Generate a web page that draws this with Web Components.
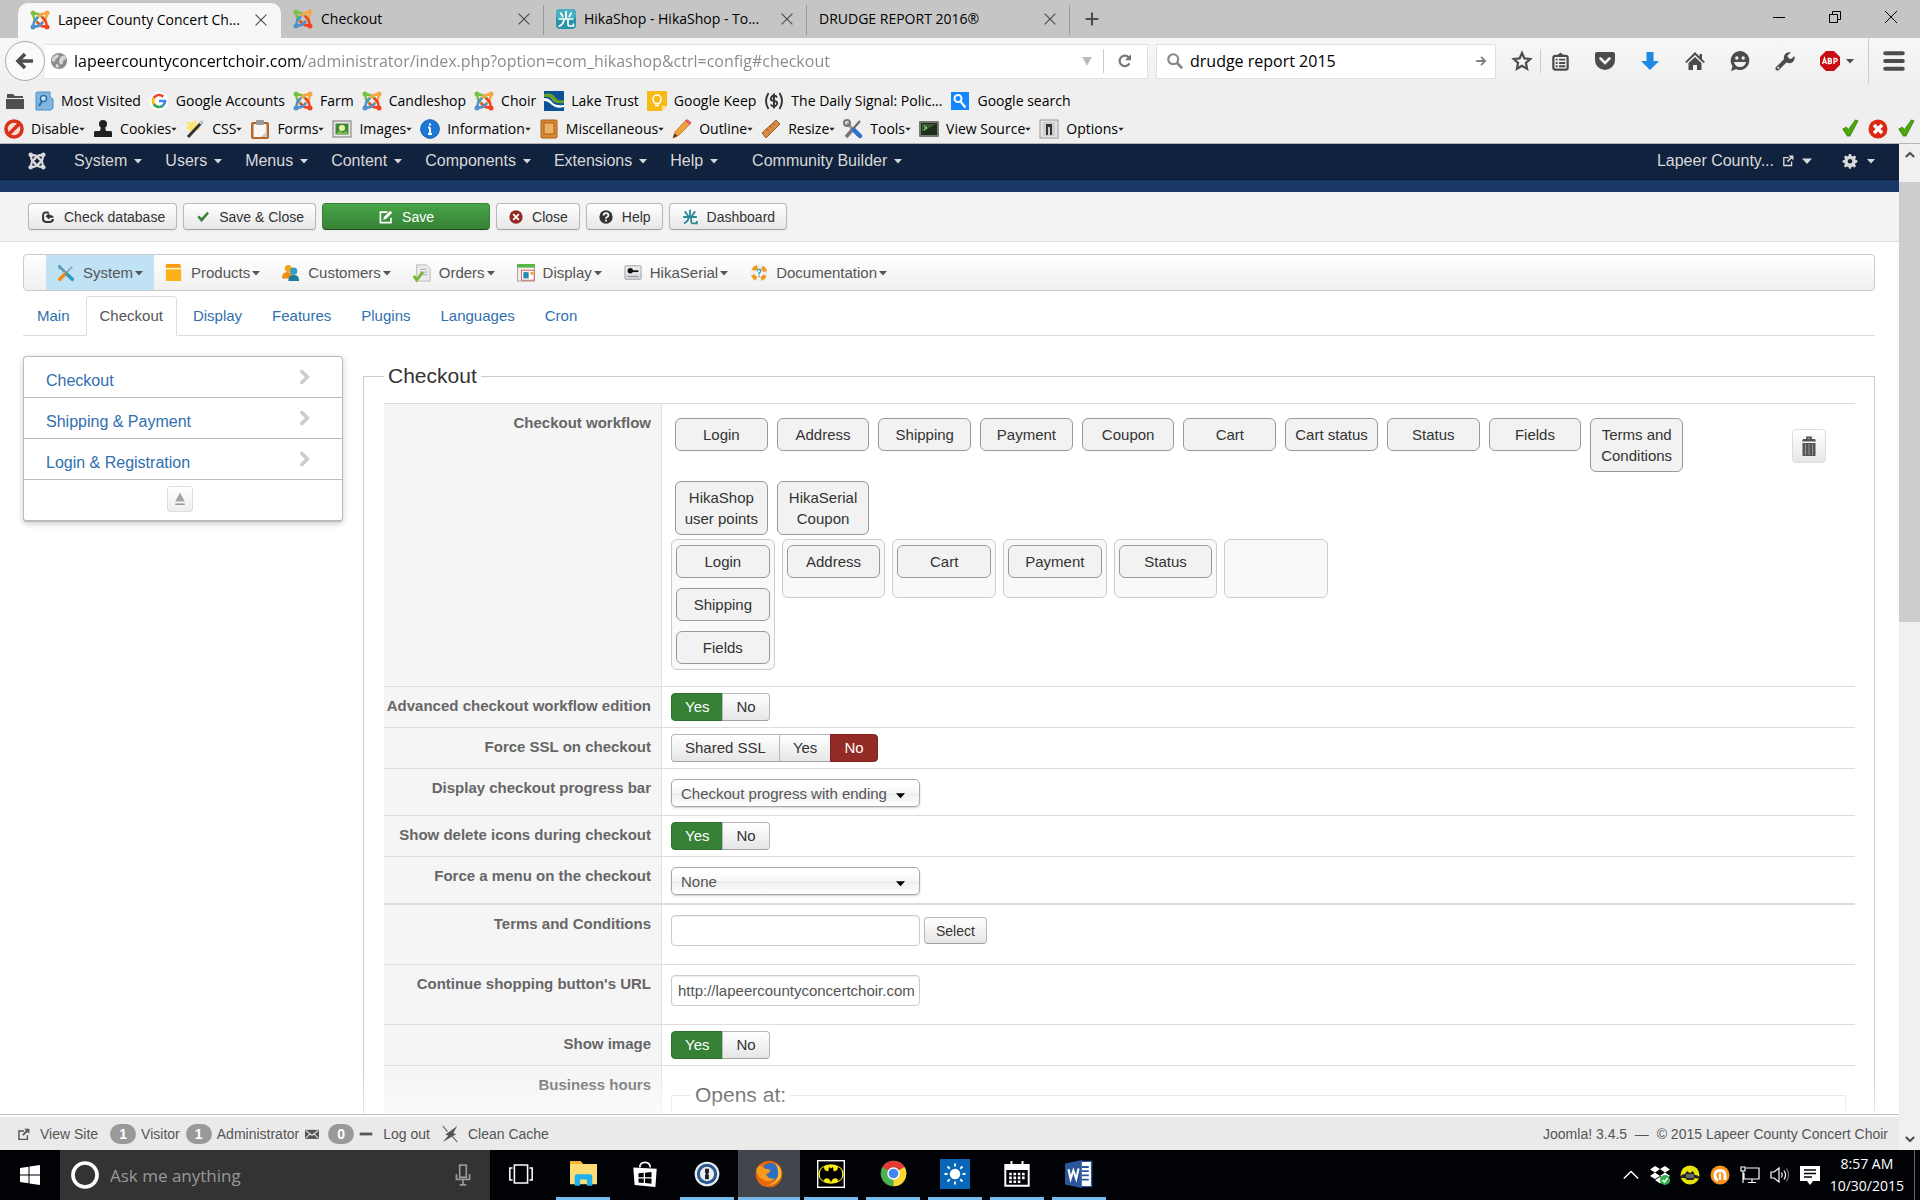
<!DOCTYPE html>
<html lang="en">
<head>
<meta charset="utf-8">
<title>Lapeer County Concert Choir - Administration</title>
<style>
html,body{margin:0;height:100%}
body{display:flex;flex-direction:column;overflow:hidden;background:#fff;font-family:"Liberation Sans",Arial,sans-serif;font-size:15px;color:#333}
</style>
</head>
<body>
<browser-chrome></browser-chrome>
<browser-view>
  <joomla-navbar></joomla-navbar>
  <page-toolbar></page-toolbar>
  <page-content></page-content>
  <status-bar></status-bar>
</browser-view>
<task-bar></task-bar>

<script>
const define = (name, css, html) => {
  const t = document.createElement('template');
  t.innerHTML = '<style>*,:host{box-sizing:border-box}:host{display:block}' + css + '</style>' + html;
  customElements.define(name, class extends HTMLElement {
    constructor() { super(); this.attachShadow({mode: 'open'}).append(t.content.cloneNode(true)); }
  });
};

/* ---------- icons ---------- */
const arm = '<path d="M8 13 5 10C3.4 8.4 3.5 6.4 3.3 3.3 6.4 3.5 8.4 3.4 10 5l3 3" fill="none" stroke-width="2.6"/><circle cx="3" cy="3" r="2.5" stroke="none"/>';
const joomla = (a, b, c, d) => [a, b, c, d].map((k, i) => `<g fill="${k}" stroke="${k}" transform="rotate(${i * 90} 10 10)">${arm}</g>`).join('');
const X = (c, w) => `<path d="M4 4 16 16M16 4 4 16" stroke="${c}" stroke-width="${w}" fill="none"/>`;
const hika = c => `<path d="M10 2v8M4.5 3.5 7 8M15.500 3.500 13 8M2.500 10h15M8 10c0 4-1.500 6-5.500 7.500M12 10v5q0 2 2 2h3.500v-2.500" stroke="${c}" stroke-width="1.700" fill="none"/>`;
const ICONS = {
  joomla: joomla('#7ac143', '#f9a541', '#f44321', '#5091cd'),
  joomlaW: joomla('#d9d9d9', '#d9d9d9', '#d9d9d9', '#d9d9d9'),
  close: X('#4d4d4d', 1.3), winclose: X('#000', 1),
  min: '<path d="M4 10.500h12" stroke="#000" fill="none"/>',
  restore: '<path d="M4.500 7.500h8v8h-8zM7.500 7V4.500h8v8H13" stroke="#000" fill="none"/>',
  plus: '<path d="M10 2v16M2 10h16" stroke="#4d4d4d" stroke-width="2.600"/>',
  hika: '<rect width="20" height="20" rx="4" fill="#2b93a8"/><rect width="20" height="10" rx="4" fill="#46b0c2"/>' + hika('#fff'),
  hika2: '<path d="M10 1v9M3.500 3 8 9M16.500 3 12 9M1.500 10h17M8.500 9c0 4-1.500 7-6 9M11.500 10v6q0 2 2 2h5v-3" stroke="#2a8796" stroke-width="2.200" fill="none"/>',
  back: '<path d="M10 3 3 10l7 7M3.500 10H18" stroke="#4c4c4c" stroke-width="3.600" fill="none"/>',
  globe: '<circle cx="10" cy="10" r="9" fill="#8c8c8c"/><path d="M3 6q4-4 7-3l-1 3-3 2-1 3-3-1zM12 5l4-1 2 4-3 1-1 4-3 1-1-4zM7 13l3 2-1 3-3-2z" fill="#d8d8d8"/>',
  drop: '<path d="M4 5h12l-6 11z" fill="#bbb"/>',
  reload: '<path d="M15.500 13A6.500 6.500 0 1 1 15 6" stroke="#777" stroke-width="2.800" fill="none"/><path d="M17.500 1.500V9H10z" fill="#777"/>',
  search: '<circle cx="8" cy="8" r="5.500" stroke="#888" stroke-width="2.400" fill="none"/><path d="M12 12l6 6" stroke="#888" stroke-width="3"/>',
  go: '<path d="M2 10h15M10 3l7 7-7 7" stroke="#808080" stroke-width="3" fill="none"/>',
  star: '<path d="M10 2l2.400 5.400 5.800.6-4.300 4 1.200 5.800L10 14.800l-5.100 3L6.100 12 1.800 8l5.800-.6z" stroke="#4c4c4c" stroke-width="2.200" fill="none"/>',
  clip: '<rect x="2.500" y="4" width="15" height="14.500" rx="2" fill="none" stroke="#4c4c4c" stroke-width="2.400"/><path d="M6 4 10 .5 14 4z" fill="#4c4c4c"/><path d="M5 8h2m1.500 0H15M5 11.500h2m1.500 0H15M5 15h2m1.500 0H15" stroke="#4c4c4c" stroke-width="2"/>',
  pocket: '<path d="M2 1h16q2 0 2 2v6a10 10 0 0 1-20 0V3q0-2 2-2z" fill="#4c4c4c"/><path d="M5.500 7.500 10 12l4.500-4.500" stroke="#f1f1f1" stroke-width="2.600" fill="none" stroke-linecap="round"/>',
  down: '<path d="M6.500 1h7v9H19l-9 9-9-9h5.500z" fill="#1e88e5"/>',
  home: '<path d="M10 1 0 11l1.500 1L10 4l8.500 8 1.500-1-3-3V3h-2.500v2.500z" fill="#4c4c4c"/><path d="M3.500 12 10 6l6.500 6v7H12v-5H8v5H3.500z" fill="#4c4c4c"/>',
  smile: '<path d="M10 0a9.500 9.500 0 1 1-4 18.200L1 20l1.500-5A9.500 9.500 0 0 1 10 0z" fill="#4c4c4c"/><circle cx="6.800" cy="7" r="1.700" fill="#f1f1f1"/><circle cx="13.200" cy="7" r="1.700" fill="#f1f1f1"/><path d="M4 11h12q-1 5-6 5t-6-5z" fill="#f1f1f1"/>',
  wrench: '<path d="M2.500 17.500 12 8" stroke="#4c4c4c" stroke-width="4" stroke-linecap="round"/><path d="M16 1.500a5.500 5.500 0 1 0 3.500 3.500L16 8l-3-1-.5-2.500z" fill="#4c4c4c"/><circle cx="3.300" cy="16.700" r="1" fill="#fff"/>',
  abp: '<path d="M6 0h8l6 6v8l-6 6H6l-6-6V6z" fill="#c70d12"/><path d="M2.500 13 4.500 7l2 6M3.300 11.300h2.500M8.300 7.500v5h1.700q1.500 0 1.500-1.300T10 10H8.500 10q1.300 0 1.300-1.200T10 7.500zM14 13V7.500h1.500q1.700 0 1.700 1.500t-1.700 1.500H14" stroke="#fff" stroke-width="1.300" fill="none"/>',
  burger: '<path d="M2 3h16M2 10h16M2 17h16" stroke="#4c4c4c" stroke-width="3.600" stroke-linecap="round"/>',
  caret: '<path d="M2 6h16l-8 9z" fill="#4c4c4c"/>', caretS: '<path d="M1 6h18l-9 10z" fill="#222"/>',
  folder: '<path d="M2 3h6l2 2h8v2H2zM1 8h18v10H1z" fill="#4f4f4f"/>',
  visited: '<path d="M3 1h13v5l3 2v9l-2 2H2V2z" fill="#7eb6df" stroke="#4d8fc4"/><circle cx="9.500" cy="7.500" r="3" fill="#cfe6f7" stroke="#2d6ea8" stroke-width="1.500"/><path d="M8 10l-3 5" stroke="#2d6ea8" stroke-width="2"/>',
  google: '<circle cx="10" cy="10" r="9.500" fill="#fff"/><g fill="none" stroke-width="2.700"><path d="M14.300 5.800A6 6 0 0 0 4.800 7" stroke="#ea4335"/><path d="M4.800 7a6 6 0 0 0 0 6" stroke="#fbbc05"/><path d="M4.800 13a6 6 0 0 0 8.800 1.800" stroke="#34a853"/><path d="M13.600 14.800A6 6 0 0 0 16 10h-6" stroke="#4285f4"/></g>',
  lake: '<rect width="20" height="20" fill="#0b5394"/><path d="M0 3q8-2 11 3t9 3v3q-9 1-12-3T0 6z" fill="#6a9f2b"/><path d="M0 7q5 0 8 4t12 3v2q-8 2-12-2T0 10z" fill="#fff"/>',
  keep: '<path d="M0 0h20v15l-5 5H0z" fill="#f7b916"/><path d="M20 15h-5v5z" fill="#fde293"/><path d="M8 12.500Q6 11 6 8a4 4 0 0 1 8 0q0 3-2 4.500zM8 14.500h4" stroke="#fff" fill="none" stroke-width="1.500"/>',
  signal: '<path d="M4.500 2q-5 8 0 16M15.500 2q5 8 0 16M13 6.500Q12 4.500 10 4.500T7 7t3 3 3 3-3 2.500-3.200-2M10 2.500v15" stroke="#333" stroke-width="1.900" fill="none"/>',
  gsearch: '<rect x="1" y="1" width="18" height="18" fill="#1387fb"/><circle cx="8" cy="7.500" r="3.500" stroke="#fff" stroke-width="2" fill="none"/><path d="M10.500 10.500l5 6" stroke="#fff" stroke-width="2.200"/>',
  disable: '<circle cx="10" cy="10" r="8" fill="#f7dcd6" stroke="#d8331a" stroke-width="3.600"/><path d="M4.500 15.500l11-11" stroke="#d8331a" stroke-width="3.600"/>',
  stamp: '<circle cx="10" cy="5" r="4" fill="#222"/><path d="M8 8h4l1 4h5q1 0 1 2v4H1v-4q0-2 1-2h5z" fill="#222"/>',
  wand: '<path d="M1 2l6 2 5-4-1 6 5 4-6 1-4 7-1-7-5-2 4-2z" fill="#ffe36e"/><path d="M3 18 17 3" stroke="#333" stroke-width="3"/><path d="M15 5l3-3" stroke="#ccc" stroke-width="3"/>',
  clipboard: '<rect x="1" y="3" width="18" height="17" rx="2" fill="#b5682b"/><rect x="3.500" y="5" width="13" height="13" fill="#f6f6f6"/><path d="M17 18h-6l6-6z" fill="#c9c9c9"/><rect x="6" y="1" width="8" height="5" rx="1" fill="#999"/>',
  image: '<rect x="1" y="2" width="18" height="16" fill="#e9e9e9" stroke="#777"/><rect x="3.500" y="4.500" width="13" height="11" fill="#3f8a34"/><circle cx="10" cy="9" r="3" fill="#e7f0a5"/><path d="M4 15l4-4 3 3 3-2 2 3z" fill="#79b84e"/>',
  info: '<circle cx="10" cy="10" r="9.300" fill="#1b78d6" stroke="#1259a8"/><path d="M10 8.500V15M8 8.500h2M8 15h4M10 4.500v2" stroke="#fff" stroke-width="2"/>',
  misc: '<rect x="2" y="1" width="16" height="18" rx="1" fill="#d9892f" stroke="#a8611b"/><rect x="5" y="4" width="10" height="11" fill="#eeb264" stroke="#a8611b"/>',
  pencil: '<path d="M1 19l2-6L14 1l4 4L7 16z" fill="#f0a13a" stroke="#b86a1d" stroke-width=".8"/><path d="M13 2l2-2 4.500 3.500L18 6z" fill="#e0576a"/><path d="M1 19l1.700-4.500L5.500 17z" fill="#4a3a2a"/>',
  ruler: '<path d="M1 14 15 1l4 4L5 19z" fill="#d98b45" stroke="#9a5a23"/><path d="M6 10l1.500 1.500M9 7l1.500 1.500M12 4.500 13.500 6" stroke="#7a4518"/>',
  tools: '<path d="M4 4 16 17" stroke="#9a9a9a" stroke-width="3"/><circle cx="4" cy="4" r="3" fill="none" stroke="#777" stroke-width="2"/><path d="M17 2 9 11" stroke="#666" stroke-width="2"/><path d="M10 10 3 18" stroke="#777" stroke-width="3.500"/><path d="M11 11l6 6" stroke="#2f6fd0" stroke-width="4.500" stroke-linecap="round"/>',
  source: '<rect x="0" y="2" width="20" height="16" rx="1" fill="#777"/><rect x="2" y="4" width="16" height="12" fill="#1c2f1a"/><path d="M3 5h14l-14 8z" fill="#3d5b35"/><path d="M5 7l3 2-3 2" stroke="#8f8" fill="none"/>',
  options: '<rect x="1" y="1" width="18" height="18" fill="#e4e4e4" stroke="#999"/><rect x="4" y="3" width="12" height="14" fill="#cfcfcf"/><path d="M7 16V5h6v11h-2V8H9v8z" fill="#333"/>',
  check: '<path d="M2 11l4-2 2 3 8-11 3 1-9 17H7z" fill="#4ca80b" stroke="#2c7505" stroke-width=".8"/>',
  error: '<circle cx="10" cy="10" r="9.500" fill="#dc2a12"/><path d="M6 6l8 8M14 6l-8 8" stroke="#fff" stroke-width="3.400"/>',
  ext: '<path d="M11 4.500H3v13h13V11" stroke="currentColor" stroke-width="2.200" fill="none"/><path d="M11 1h8v8l-3-3-6 6-2-2 6-6z" fill="currentColor"/>',
  gear: '<path d="M8.300 0h3.400l.5 2.800 2 .8L16.500 2 19 4.400l-1.700 2.400.8 1.900 2.400.4v3.200l-2.600.5-.8 2 1.500 2.400-2.300 2.300-2.400-1.600-2 .9-.5 2.400H8.500l-.6-2.500-2-.9-2.300 1.600L1.300 17l1.500-2.300-.8-2-2.500-.5V9l2.600-.5.8-1.900L1.300 4.300 3.700 2l2.300 1.600 1.900-.8z" fill="#d9d9d9"/><circle cx="10" cy="10.500" r="3.200" fill="#10223e"/>',
  caretW: '<path d="M0 5h20L10 16z" fill="#d9d9d9"/>', caretD: '<path d="M0 5h20L10 16z" fill="#555"/>', caretB: '<path d="M0 5h20L10 16z" fill="#000"/>',
  checkin: '<path d="M11 3.500H7q-4 0-4 4V13q0 4 4 4h6q4 0 4-4" stroke="#333" stroke-width="2.800" fill="none"/><path d="M18 11h-6v3L6.500 9 12 4v3q6 0 6 4z" fill="#333"/>',
  tick: '<path d="M2 10.500 4.500 8 8 11.500 16 2.500 18.500 5 8 17z" fill="#378137"/>',
  edit: '<path d="M12 3H2v15h15v-7" stroke="#fff" stroke-width="2.400" fill="none"/><path d="M6 14l1-4 9-9 3 3-9 9z" fill="#fff"/>',
  cancel: '<circle cx="10" cy="10" r="9.500" fill="#942a25"/><path d="M6 6l8 8M14 6l-8 8" stroke="#fff" stroke-width="2.600"/>',
  help: '<circle cx="10" cy="10" r="9.500" fill="#333"/><path d="M6.500 8q0-3.500 3.500-3.500T13.500 7.500q0 1.500-2 2.500T10 12.500M10 14v2.500" stroke="#fff" stroke-width="2.500" fill="none"/>',
  hsystem: '<path d="M3 3l8 8" stroke="#5e9fb8" stroke-width="3"/><path d="M1 1l3 0 1 4-3 1z" fill="#5e9fb8"/><path d="M17 3 7 13" stroke="#8fa9b5" stroke-width="2"/><path d="M9 11 3 17" stroke="#f08a1d" stroke-width="4" stroke-linecap="round"/><path d="M11 11l6 6" stroke="#2c9cc4" stroke-width="4" stroke-linecap="round"/>',
  hproducts: '<path d="M1 1h16l1 3v15H1z" fill="#fbb11a"/><path d="M1 4h17v2H1z" fill="#fff3c4"/><path d="M1 0h16v4H1z" fill="#f59c12"/>',
  hcustomers: '<circle cx="7" cy="5" r="4" fill="#f6a21c"/><path d="M0 16q0-7 6-7t6 7z" fill="#f08c12"/><circle cx="13" cy="8" r="4" fill="#2e9fc0"/><path d="M7 19q0-7 6-7t6 7z" fill="#1d7c9c"/>',
  horders: '<path d="M4 1h11l4 4v14H4z" fill="#ececec" stroke="#b5b5b5"/><path d="M8 6h7M8 9h8M8 12h8" stroke="#9aa"/><path d="M1 13l3 5 7-9" stroke="#79b52c" stroke-width="3" fill="none"/>',
  hdisplay: '<rect x=".5" y="1" width="19" height="18" fill="#eee" stroke="#999"/><rect x="0" y="0" width="20" height="4" fill="#5ab545"/><rect x="5" y="7" width="14" height="11" fill="#fff" stroke="#e05a4c"/><rect x="7" y="9" width="6" height="7" fill="#258bb5"/><rect x="15" y="9" width="3" height="3" fill="#f6a21c"/>',
  hserial: '<rect x="1" y="2" width="18" height="15" rx="1" fill="#d8dadd" stroke="#9a9da3"/><rect x="2" y="3" width="16" height="8" fill="#e9eaec"/><circle cx="7" cy="7.500" r="3" fill="#111"/><path d="M9 7h7v2H9z" fill="#111"/><path d="M4 14h12" stroke="#888"/>',
  hdoc: '<circle cx="10" cy="10" r="7" fill="none" stroke="#e9eef0" stroke-width="5"/><circle cx="10" cy="10" r="7" fill="none" stroke="#f29a1f" stroke-width="4.500" stroke-dasharray="5.500 5.500" stroke-dashoffset="-2.700"/><path d="M8 8q0-2 2-2t2 1.700q0 1.300-2 2.300v2M10 13v1.500" stroke="#2c9cc4" stroke-width="1.500" fill="none"/>',
  chevron: '<path d="M6 3l7 7-7 7" stroke="#ccc" stroke-width="4.500" fill="none" stroke-linecap="round"/>',
  eject: '<path d="M10 2l6 11H4z" fill="#a3a3a3"/><path d="M4 16.500h12" stroke="#999" stroke-width="2"/>',
  trash: '<path d="M8 3V1.500h4V3" stroke="#555" stroke-width="1.800" fill="none"/><path d="M4 3h12l1 2.500H3zM3.500 7h13v13h-13z" fill="#555"/><path d="M6.500 8v11M10 8v11M13.500 8v11" stroke="#999" stroke-width="1"/>',
  mail: '<path d="M0 4h20v13H0z" fill="#555"/><path d="M1 5l9 7 9-7M1 16l6-6M19 16l-6-6" stroke="#eaeaea" stroke-width="1.500" fill="none"/>',
  minus: '<path d="M1 10h18" stroke="#555" stroke-width="4"/>',
  cache: '<path d="M1 0l6 7M13 13l6 7" stroke="#555" stroke-width="1.300"/><path d="M19 0l-5 9 4 1L1 20l7-8-4-1z" fill="#555"/>',
  up: '<path d="M4 13l6-6 6 6" stroke="#505050" stroke-width="3" fill="none"/>',
  dn: '<path d="M4 7l6 6 6-6" stroke="#505050" stroke-width="3" fill="none"/>',
  win: '<path d="M0 3l8.500-1.200v7.700H0zM9.500 1.600 20 0v9.500H9.500zM0 10.500h8.500v7.700L0 17zM9.500 10.500H20V20L9.500 18.400z" fill="#fff"/>',
  cortana: '<circle cx="10" cy="10" r="8.600" fill="none" stroke="#fff" stroke-width="2.600"/>',
  mic: '<rect x="7" y="1" width="6" height="11" fill="none" stroke="#999" stroke-width="1.500"/><path d="M4 9v5h12V9M10 14v5M7 19h6" stroke="#999" stroke-width="1.500" fill="none"/>',
  taskview: '<path d="M4.500 2.500h11v15h-11zM3 5H.700v10H3M17 5h2.300v10H17" stroke="#fff" stroke-width="1.300" fill="none"/>',
  explorer: '<path d="M0 1h8l1.500 2H20v15H0z" fill="#fddc75"/><path d="M0 1h8l1.500 2H0z" fill="#f3b62c"/><path d="M3.500 19v-7q0-1.500 1.500-1.500h10q1.500 0 1.500 1.500v7h-4v-4.500h-5V19z" fill="#1fb1ef"/>',
  store: '<path d="M1 5l18 1-1 14-16-1.500z" fill="#fff"/><path d="M6 5Q6 1 10 1t4 4" stroke="#fff" stroke-width="1.300" fill="none"/><path d="M5 9.500l4-.5v3.500H5zM10 9l5-.5v4h-5zM5 13.500h4V17l-4-.5zM10 13.500h5v4l-5-.5z" fill="#000206"/>',
  onepass: '<circle cx="10" cy="10" r="9.500" fill="#e9edf2"/><circle cx="10" cy="10" r="7.800" fill="#28588f"/><circle cx="10" cy="10" r="5.500" fill="#e9edf2"/><path d="M8.500 6h3v3l-.7 1 .7 1v3h-3v-3l.7-1-.7-1z" fill="#222"/>',
  firefox: '<circle cx="10" cy="10" r="9.500" fill="#e8660c"/><circle cx="11" cy="8.500" r="6.300" fill="#2f6fc1"/><path d="M1 6q1 0 2-2 2 0 4 2l4 1q0 2-3 3 1 4 6 3-2 3-6 2Q1 13 1 6z" fill="#f79a1b"/><path d="M14 2q6 4 4.500 10-3 6-9 6 8-3 7-9 0-4-2.500-7z" fill="#fbc02d"/>',
  bat: '<rect width="20" height="20" fill="#fff"/><rect x="1" y="1" width="18" height="18" fill="#000"/><ellipse cx="10" cy="10" rx="9" ry="7" fill="#f6ea12"/><path d="M2 10q0-4 3-5 0 3 3 3l.7-3 1.300 1 1.300-1 .7 3q3 0 3-3 3 1 3 5t-3 5q0-2-2-2t-3 3q-1-3-3-3t-2 2q-3-1-3-5z" fill="#000"/>',
  chrome: '<circle cx="10" cy="10" r="9.500" fill="#4caf50"/><path d="M10 10 1.800 5.200A9.500 9.500 0 0 1 18.200 5.200z" fill="#e53935"/><path d="M10 10l8.200-4.800A9.500 9.500 0 0 1 10 19.500z" fill="#fdd835"/><circle cx="10" cy="10" r="4.600" fill="#fff"/><circle cx="10" cy="10" r="3.600" fill="#4285f4"/>',
  weather: '<rect width="20" height="20" fill="#0867b8"/><circle cx="10" cy="10" r="3.500" fill="#fff"/><path d="M10 3v2M10 15v2M3 10h2M15 10h2M5 5l1.500 1.500M13.500 13.500 15 15M15 5l-1.500 1.500M6.500 13.500 5 15" stroke="#fff" stroke-width="1.200"/>',
  calendar: '<path d="M1 3h18v16H1z" fill="none" stroke="#fff" stroke-width="1.500"/><path d="M1 3h18v4H1zM5 0h1.500v4H5zM13.500 0H15v4h-1.500z" fill="#fff"/><path d="M4 10h12M4 13h12M4 16h9" stroke="#fff" stroke-width="2" stroke-dasharray="2 1.300"/>',
  word: '<path d="M11 1h8v18h-8z" fill="#fff" stroke="#2b579a"/><path d="M12 5h5M12 8h5M12 11h5M12 14h5" stroke="#2b579a" stroke-width="1.300"/><path d="M0 2.500 12 0v20L0 17.500z" fill="#2b579a"/><path d="M2.500 6.500l1.500 7 2-6 2 6 1.700-7.500" stroke="#fff" stroke-width="1.500" fill="none"/>',
  trayup: '<path d="M2 14l8-8 8 8" stroke="#fff" stroke-width="1.600" fill="none"/>',
  dropbox: '<path d="M5 1l5 3-5 3.500L0 4.500zM15 1l5 3.500-5 3L10 4zM5 7.500 10 11l-5 3-5-3zM15 7.500l5 3.500-5 3-5-3zM10 12l5 3-5 3.500L5 15z" fill="#fff"/><circle cx="15" cy="15" r="5" fill="#2fb344"/><path d="M12.500 15l2 2 3-4" stroke="#fff" stroke-width="1.500" fill="none"/>',
  traybat: '<circle cx="10" cy="10" r="9.500" fill="#e8e409"/><path d="M0 13q1-4 5-4l2-3 3 2 3-2 2 4q4 0 5 4l-5-1-2 2H7l-2-2z" fill="#222"/><path d="M6 9h8v4H6z" fill="#666"/>',
  avast: '<circle cx="10" cy="10" r="9.500" fill="#f7931e"/><path d="M8 15.500Q5 14 5 10.500 5 5.500 10 5.500t5 5v4.500" stroke="#fff" stroke-width="2.800" fill="none"/><path d="M10 9v5" stroke="#fff" stroke-width="2.200" stroke-linecap="round"/>',
  net: '<path d="M6 3h13v11H4V8M12 14v3M8 17.500h8M1 2h4v4H1zM3 6v12" stroke="#fff" stroke-width="1.200" fill="none"/>',
  vol: '<path d="M1 7h3l5-4v14l-5-4H1z" stroke="#fff" stroke-width="1.200" fill="none"/><path d="M11.500 7.500q1.500 2.500 0 5M14 5.500q3 4.500 0 9" stroke="#fff" stroke-width="1.200" fill="none"/><path d="M16.500 3.500q4 6.500 0 13" stroke="#777" stroke-width="1.200" fill="none"/>',
  note: '<path d="M0 1h20v15h-7l-3 4-3-4H0z" fill="#fff"/><path d="M4 5h12M4 8.500h12M4 12h8" stroke="#000206" stroke-width="1.300"/>'
};
customElements.define('x-icon', class extends HTMLElement {
  connectedCallback() {
    if (this.shadowRoot) return;
    const s = +this.getAttribute('size') || 20;
    this.attachShadow({mode: 'open'}).innerHTML =
      `<style>:host{display:block;flex:none;width:${s}px;height:${s}px}svg{display:block;overflow:visible}</style>
       <svg width="${s}" height="${s}" viewBox="0 0 20 20" aria-hidden="true">${ICONS[this.getAttribute('name')] || ''}</svg>`;
  }
});

/* ---------- browser chrome ---------- */
class IconLink extends HTMLElement {
  connectedCallback() {
    if (this.shadowRoot) return;
    this.attachShadow({mode: 'open'}).innerHTML =
      `<style>:host{display:block}a{display:flex;align-items:center;gap:7px;color:#000;text-decoration:none;white-space:nowrap}
       span{display:flex;align-items:center}</style>
       <a href="#"><x-icon name="${this.getAttribute('icon')}"></x-icon><span><slot></slot>${this.hasAttribute('menu') ? '<x-icon name="caretS" size="6"></x-icon>' : ''}</span></a>`;
  }
}
customElements.define('icon-link', IconLink);

customElements.define('browser-tab', class extends HTMLElement {
  connectedCallback() {
    if (this.shadowRoot) return;
    const icon = this.getAttribute('icon');
    this.attachShadow({mode: 'open'}).innerHTML =
      `<style>*{box-sizing:border-box}:host{display:flex;align-items:center;gap:8px;width:263px;padding:0 10px 0 12px;border-right:1px solid transparent}
       :host([line]){border-image:linear-gradient(#0000 6px,#9a9a9a 6px,#9a9a9a 34px,#0000 34px) 1}
       span{flex:1;white-space:nowrap;overflow:hidden}
       button{border:0;background:none;padding:0;display:block}
       </style>
       ${icon ? `<x-icon name="${icon}"></x-icon>` : ''}<span><slot></slot></span><button aria-label="Close tab"><x-icon name="close" size="18"></x-icon></button>`;
  }
});

define('browser-chrome', `
:host{background:#efefef;border-bottom:1px solid #b5b5b5;font:14px/20px "Open Sans","Noto Sans",sans-serif;color:#000;flex:none}
.tabs{display:flex;height:38px;background:#c5c5c5;padding-left:18px}
.active{background:#f7f7f7;border-radius:10px 10px 0 0;height:35px;margin-top:3px;padding-bottom:2px}
.plus{border:0;background:none;padding:0 0 0 14px}
.win{display:flex;align-items:flex-start;gap:36px;margin-left:auto;padding:7px 19px 0 0}
.nav{display:flex;align-items:center;height:46px;padding:0 15px 0 5px;background:linear-gradient(#f7f7f7,#efefef)}
button{border:0;background:none;padding:0;display:flex;align-items:center}
.back{width:40px;height:40px;border:1px solid #aaa;border-radius:50%;background:#fafafa;justify-content:center;flex:none}
.url{display:flex;align-items:center;flex:1;height:35px;background:#fff;border:1px solid #e0e0e0;border-left:0;padding-left:5px;margin-right:8px}
input{flex:1;min-width:0;border:0;outline:0;padding:0 6px;font:16px/22px "Open Sans","Noto Sans",sans-serif;background:none;color:#000}
#u{-webkit-text-fill-color:transparent;background:linear-gradient(90deg,#000 235px,#888 0) text}
.reload{border-left:1px solid #ccc;padding:4px 14px 4px 13px;margin-left:8px}
.find{display:flex;align-items:center;width:340px;height:35px;background:#fff;border:1px solid #e0e0e0;padding:0 8px 0 9px;margin-right:16px}
.set{display:flex;align-items:center;gap:25px}
.abp{gap:5px}
.v{width:1px;height:24px;background:#ccc;margin:0 10px 0 8px}
.v2{width:1px;height:46px;background:#ccc;margin:0 14px 0 13px}
.row{display:flex;align-items:center;gap:8px;height:28px;padding:0 5px 0 4px}
.row.bm{height:31px;gap:8px;padding:2px 5px 0}
.row.bm x-icon{margin-right:1px}
.end{display:flex;gap:9px;margin-left:auto}`, `
<div class="tabs">
  <browser-tab class="active" icon="joomla">Lapeer County Concert Ch...</browser-tab>
  <browser-tab icon="joomla" line>Checkout</browser-tab>
  <browser-tab icon="hika" line>HikaShop - HikaShop - To...</browser-tab>
  <browser-tab line>DRUDGE REPORT 2016®</browser-tab>
  <button class="plus" aria-label="New tab"><x-icon name="plus" size="16"></x-icon></button>
  <div class="win"><button aria-label="Minimize"><x-icon name="min"></x-icon></button><button aria-label="Restore"><x-icon name="restore"></x-icon></button><button aria-label="Close"><x-icon name="winclose"></x-icon></button></div>
</div>
<div class="nav">
  <button class="back" aria-label="Back"><x-icon name="back" size="20"></x-icon></button>
  <div class="url"><x-icon name="globe" size="18"></x-icon>
    <input id="u" aria-label="Address" value="lapeercountyconcertchoir.com/administrator/index.php?option=com_hikashop&amp;ctrl=config#checkout">
    <x-icon name="drop" size="16"></x-icon><button class="reload" aria-label="Reload"><x-icon name="reload" size="16"></x-icon></button></div>
  <div class="find"><x-icon name="search" size="18"></x-icon><input aria-label="Search" value="drudge report 2015"><button aria-label="Go"><x-icon name="go" size="12"></x-icon></button></div>
  <button aria-label="Bookmark"><x-icon name="star"></x-icon></button><i class="v"></i>
  <div class="set">
    <button aria-label="Bookmarks"><x-icon name="clip" size="19"></x-icon></button><button aria-label="Pocket"><x-icon name="pocket"></x-icon></button>
    <button aria-label="Downloads"><x-icon name="down"></x-icon></button><button aria-label="Home"><x-icon name="home"></x-icon></button>
    <button aria-label="Chat"><x-icon name="smile"></x-icon></button><button aria-label="Developer"><x-icon name="wrench"></x-icon></button>
    <button class="abp" aria-label="Adblock"><x-icon name="abp"></x-icon><x-icon name="caret" size="10"></x-icon></button>
  </div><i class="v2"></i>
  <button aria-label="Menu"><x-icon name="burger" size="22"></x-icon></button>
</div>
<div class="row bm">
  <x-icon name="folder"></x-icon>
  <icon-link icon="visited">Most Visited</icon-link><icon-link icon="google">Google Accounts</icon-link>
  <icon-link icon="joomla">Farm</icon-link><icon-link icon="joomla">Candleshop</icon-link><icon-link icon="joomla">Choir</icon-link>
  <icon-link icon="lake">Lake Trust</icon-link><icon-link icon="keep">Google Keep</icon-link>
  <icon-link icon="signal">The Daily Signal: Polic...</icon-link><icon-link icon="gsearch">Google search</icon-link>
</div>
<div class="row">
  <icon-link menu icon="disable">Disable</icon-link><icon-link menu icon="stamp">Cookies</icon-link><icon-link menu icon="wand">CSS</icon-link>
  <icon-link menu icon="clipboard">Forms</icon-link><icon-link menu icon="image">Images</icon-link><icon-link menu icon="info">Information</icon-link>
  <icon-link menu icon="misc">Miscellaneous</icon-link><icon-link menu icon="pencil">Outline</icon-link><icon-link menu icon="ruler">Resize</icon-link>
  <icon-link menu icon="tools">Tools</icon-link><icon-link menu icon="source">View Source</icon-link><icon-link menu icon="options">Options</icon-link>
  <div class="end"><x-icon name="check" size="18"></x-icon><x-icon name="error"></x-icon><x-icon name="check" size="18"></x-icon></div>
</div>`);

/* ---------- viewport with scrollbar ---------- */
define('browser-view', `
:host{display:flex;flex:1;min-height:0}
.page{flex:1;min-width:0;display:flex;flex-direction:column}
.bar{width:21px;background:#f0f0f0;display:flex;flex-direction:column;align-items:center;padding:4px 0;gap:20px;flex:none}
.thumb{width:100%;height:440px;background:#cdcdcd;margin-bottom:auto}`, `
<div class="page"><slot></slot></div>
<div class="bar"><x-icon name="up" size="14"></x-icon><div class="thumb"></div><x-icon name="dn" size="14"></x-icon></div>`);

/* ---------- Joomla top bar ---------- */
customElements.define('menu-link', class extends HTMLElement {
  connectedCallback() {
    if (this.shadowRoot) return;
    this.attachShadow({mode: 'open'}).innerHTML =
      `<style>:host{display:block}a{display:flex;align-items:center;gap:var(--caret-gap,7px);color:#d9d9d9;text-decoration:none;white-space:nowrap}</style>
       <a href="#"><slot></slot><x-icon name="caretW" size="8"></x-icon></a>`;
  }
});
define('joomla-navbar', `
:host{flex:none;background:#1a3867;height:48px}
nav{display:flex;align-items:center;gap:23px;height:36px;padding:0 24px 2px 28px;background:#10223e;border-bottom:1px solid #0b172b;font-size:16px;line-height:20px}
.logo{margin-right:5px}
.cb{margin-left:11px}
.site{margin-left:auto;display:flex;align-items:center;gap:8px;color:#d9d9d9}
.gear{margin-left:8px;--caret-gap:10px}
a{color:#d9d9d9;text-decoration:none}`, `
<nav>
  <x-icon class="logo" name="joomlaW" size="18"></x-icon>
  <menu-link>System</menu-link><menu-link>Users</menu-link><menu-link>Menus</menu-link><menu-link>Content</menu-link>
  <menu-link>Components</menu-link><menu-link>Extensions</menu-link><menu-link>Help</menu-link><menu-link class="cb">Community Builder</menu-link>
  <div class="site"><a href="#">Lapeer County...</a><x-icon name="ext" size="12"></x-icon><x-icon name="caretW" size="10"></x-icon></div>
  <menu-link class="gear"><x-icon name="gear" size="14"></x-icon></menu-link>
</nav>`);

/* ---------- action buttons ---------- */
customElements.define('action-button', class extends HTMLElement {
  connectedCallback() {
    if (this.shadowRoot) return;
    this.attachShadow({mode: 'open'}).innerHTML =
      `<style>:host{display:block}
       button{box-sizing:border-box;display:flex;align-items:center;justify-content:center;gap:9px;height:27px;padding:0 11px 0 12px;border:1px solid #b8b8b8;border-bottom-color:#a2a2a2;border-radius:4px;background:linear-gradient(#fff,#e6e6e6);color:#333;font:14px/20px "Liberation Sans",Arial,sans-serif;white-space:nowrap;box-shadow:0 1px 2px #0000000d}
       :host([primary]) button{width:168px;background:linear-gradient(#46a546,#378137);border-color:#378137 #378137 #204b20;color:#fff}</style>
       <button><x-icon name="${this.getAttribute('icon')}" size="${this.getAttribute('icon') === 'hika2' ? 16 : 14}"></x-icon><slot></slot></button>`;
  }
});
define('page-toolbar', `
:host{display:flex;flex:none;gap:6px;height:50px;padding:11px 28px 0;background:#f3f3f3;border-bottom:1px solid #e0e0e0}`, `
<action-button icon="checkin">Check database</action-button><action-button icon="tick">Save &amp; Close</action-button>
<action-button icon="edit" primary>Save</action-button><action-button icon="cancel">Close</action-button>
<action-button icon="help">Help</action-button><action-button icon="hika2">Dashboard</action-button>`);

/* ---------- HikaShop menu, tabs, side menu ---------- */
customElements.define('hika-item', class extends HTMLElement {
  connectedCallback() {
    if (this.shadowRoot) return;
    this.attachShadow({mode: 'open'}).innerHTML =
      `<style>:host{display:block}a{display:flex;align-items:center;height:100%;padding:0 11px;color:#555;text-decoration:none}
       :host([active]){background:#bfe2f4}span{margin:0 2px 0 8px}</style>
       <a href="#"><x-icon name="${this.getAttribute('icon')}" size="18"></x-icon><span><slot></slot></span><x-icon name="caretD" size="8"></x-icon></a>`;
  }
});
define('hika-menu', `
:host{display:flex;height:37px;padding-left:22px;border:1px solid #ccc;border-radius:4px;background:linear-gradient(#fff,#f0f0f0)}`, `
<hika-item icon="hsystem" active>System</hika-item><hika-item icon="hproducts">Products</hika-item><hika-item icon="hcustomers">Customers</hika-item>
<hika-item icon="horders">Orders</hika-item><hika-item icon="hdisplay">Display</hika-item><hika-item icon="hserial">HikaSerial</hika-item>
<hika-item icon="hdoc">Documentation</hika-item>`);
define('tab-strip', `
:host{display:flex;gap:2px;border-bottom:1px solid #ddd;height:40px}
a{height:40px;padding:9px 13px 0;border:1px solid transparent;line-height:20px;color:#2f6fb0;text-decoration:none}
.on{background:#fff;border-color:#ddd #ddd #fff;border-radius:4px 4px 0 0;color:#555}`, `
<a href="#main">Main</a><a href="#checkout" class="on">Checkout</a><a href="#display">Display</a><a href="#features">Features</a>
<a href="#plugins">Plugins</a><a href="#languages">Languages</a><a href="#cron">Cron</a>`);
define('side-menu', `
:host{width:320px;flex:none;border:1px solid #bbb;border-bottom-width:2px;border-radius:4px;box-shadow:0 2px 6px #0003;font-size:16px;background:#fff}
a{display:flex;align-items:center;justify-content:space-between;height:41px;padding:7px 29px 0 22px;border-bottom:1px solid #bbb;color:#2f6fb0;text-decoration:none}
x-icon{margin-bottom:8px}
.foot{display:flex;justify-content:center;padding:6px 6px 8px 0}
button{width:26px;height:26px;display:flex;align-items:center;justify-content:center;padding:0;border:1px solid #ddd;border-radius:3px;background:linear-gradient(#fff,#eee)}
button x-icon{margin:0}`, `
<a href="#c">Checkout<x-icon name="chevron" size="16"></x-icon></a><a href="#s">Shipping &amp; Payment<x-icon name="chevron" size="16"></x-icon></a>
<a href="#l">Login &amp; Registration<x-icon name="chevron" size="16"></x-icon></a>
<div class="foot"><button aria-label="Back to top"><x-icon name="eject" size="16"></x-icon></button></div>`);

/* ---------- checkout workflow ---------- */
define('flow-step', `
:host{padding:5px 4px;border:1px solid #999;border-radius:6px;background:#f2f2f2;color:#333;line-height:21px;text-align:center;align-self:start;cursor:move}`, `<slot></slot>`);
define('flow-column', `
:host{display:flex;flex-direction:column;gap:10px;min-height:59px;padding:5px 4px;border:1px solid #ccc;border-radius:6px;background:#f9f9f9;align-self:start}
::slotted(*){align-self:stretch}`, `<slot></slot>`);
define('workflow-editor', `
:host{display:flex;justify-content:space-between;padding:14px 29px 10px 0}
.pool{display:grid;grid-template-columns:repeat(10,1fr);gap:9px;width:1016px;padding:0 4px}
.cols{display:grid;grid-template-columns:repeat(6,1fr);gap:7px;width:657px;margin-top:4px}
button{width:34px;height:34px;margin-top:11px;display:flex;align-items:center;justify-content:center;padding:0;border:1px solid #ddd;border-radius:4px;background:linear-gradient(#fff,#e6e6e6)}`, `
<div><div class="pool">
<flow-step>Login</flow-step><flow-step>Address</flow-step><flow-step>Shipping</flow-step><flow-step>Payment</flow-step><flow-step>Coupon</flow-step>
<flow-step>Cart</flow-step><flow-step>Cart status</flow-step><flow-step>Status</flow-step><flow-step>Fields</flow-step><flow-step>Terms and Conditions</flow-step>
<flow-step>HikaShop user points</flow-step><flow-step>HikaSerial Coupon</flow-step></div>
<div class="cols">
<flow-column><flow-step>Login</flow-step><flow-step>Shipping</flow-step><flow-step>Fields</flow-step></flow-column>
<flow-column><flow-step>Address</flow-step></flow-column><flow-column><flow-step>Cart</flow-step></flow-column>
<flow-column><flow-step>Payment</flow-step></flow-column><flow-column><flow-step>Status</flow-step></flow-column><flow-column></flow-column></div></div>
<button aria-label="Delete"><x-icon name="trash" size="20"></x-icon></button>`);

/* ---------- settings form ---------- */
const toggle = (id, opts, on, cls) => `<div class="toggle" role="radiogroup" aria-labelledby="${id}">` + opts.map((o, i) =>
  `<label class="${i === on ? cls : ''}"><input type="radio" name="${id}"${i === on ? ' checked' : ''}>${o}</label>`).join('') + '</div>';
const select = (id, v) => `<div class="select"><select id="${id}"><option>${v}</option></select><x-icon name="caretB" size="9"></x-icon></div>`;
define('checkout-settings', `
:host{flex:1;min-width:0}
fieldset{margin:0;min-width:0;border:1px solid #ccc;padding:7px 19px 400px 20px}
legend{padding:0 4px;font-size:21px;line-height:40px;color:#333}
.row{display:flex;border-top:1px solid #ddd}
.row.two{border-top-width:2px}
.name{width:278px;flex:none;background:#f5f5f5;border-right:1px solid #e3e3e3;padding:9px 10px 0 0;text-align:right;font-weight:bold;line-height:20px;color:#666;white-space:nowrap}
.val{flex:1;min-width:0;padding:6px 0 6px 9px}
.val.a{padding-bottom:8px;padding-top:10px}
.val.b{display:flex;gap:4px;padding-top:10px;padding-bottom:18px}
.val.w{padding-top:0}
.toggle{display:flex}
.toggle label{height:28px;line-height:26px;padding:0 13px;border:1px solid #b8b8b8;border-bottom-color:#a2a2a2;margin-left:-1px;background:linear-gradient(#fff,#e6e6e6);color:#333}
.toggle label:first-child{margin-left:0;border-radius:4px 0 0 4px}.toggle label:last-child{border-radius:0 4px 4px 0}
.toggle .yes{background:#378137;border-color:#2f6f2f;color:#fff}.toggle .no{background:#942a25;border-color:#802420;color:#fff}
.toggle input{appearance:none;width:0;height:0;margin:0;float:left}
.select{display:grid;width:249px;align-items:center}
.select>*{grid-area:1/1}
.select x-icon{justify-self:end;margin:4px 15px 0 0}
select{appearance:none;height:28px;border:1px solid #aaa;border-radius:5px;padding:0 9px;background:linear-gradient(#fff 20%,#f6f6f6 50%,#eee 52%,#fff);box-shadow:0 1px 2px #0003;color:#555;font:15px "Liberation Sans",Arial,sans-serif}
.val input[type=text]{width:249px;height:31px;border:1px solid #ccc;border-radius:4px;padding:0 4px 0 6px;color:#555;font:15px "Liberation Sans",Arial,sans-serif;box-shadow:inset 0 1px 1px #00000013}
.btn{height:27px;margin-top:2px;padding:0 11px;border:1px solid #b8b8b8;border-bottom-color:#a2a2a2;border-radius:4px;background:linear-gradient(#fff,#e6e6e6);color:#333;font:14px "Liberation Sans",Arial,sans-serif}
.val fieldset{margin:3px 9px 0 0;border-color:#ddd;padding:0 19px 60px}
.val legend{line-height:40px}`, `
<fieldset><legend>Checkout</legend>
<div class="row"><div class="name">Checkout workflow</div><div class="val w"><workflow-editor></workflow-editor></div></div>
<div class="row"><div class="name" id="adv">Advanced checkout workflow edition</div><div class="val">${toggle('adv', ['Yes', 'No'], 0, 'yes')}</div></div>
<div class="row"><div class="name" id="ssl">Force SSL on checkout</div><div class="val">${toggle('ssl', ['Shared SSL', 'Yes', 'No'], 2, 'no')}</div></div>
<div class="row"><label class="name" for="bar">Display checkout progress bar</label><div class="val a">${select('bar', 'Checkout progress with ending')}</div></div>
<div class="row"><div class="name" id="del">Show delete icons during checkout</div><div class="val">${toggle('del', ['Yes', 'No'], 0, 'yes')}</div></div>
<div class="row"><label class="name" for="menu">Force a menu on the checkout</label><div class="val a">${select('menu', 'None')}</div></div>
<div class="row two"><label class="name" for="terms">Terms and Conditions</label><div class="val b"><input type="text" id="terms"><button class="btn">Select</button></div></div>
<div class="row"><label class="name" for="cont">Continue shopping button's URL</label><div class="val b"><input type="text" id="cont" value="http://lapeercountyconcertchoir.com"></div></div>
<div class="row"><div class="name" id="img">Show image</div><div class="val">${toggle('img', ['Yes', 'No'], 0, 'yes')}</div></div>
<div class="row"><div class="name">Business hours</div><div class="val"><fieldset><legend>Opens at:</legend></fieldset></div></div>
</fieldset>`);

define('page-content', `
:host{flex:1;min-height:0;overflow:hidden;padding:12px 24px 0 23px;display:grid;grid-template-rows:minmax(0,1fr)}
.in{grid-area:1/1;display:flex;flex-direction:column;overflow:visible}
tab-strip{margin-top:5px;flex:none}hika-menu{flex:none}
.cols{display:flex;align-items:flex-start;gap:20px;padding-top:20px}
.fade{grid-area:1/1;align-self:end;height:44px;z-index:1;background:linear-gradient(#fff0,#fff9);pointer-events:none}`, `
<div class="in"><hika-menu></hika-menu><tab-strip></tab-strip>
<div class="cols"><side-menu></side-menu><checkout-settings></checkout-settings></div></div><div class="fade"></div>`);

define('status-bar', `
:host{display:flex;align-items:center;flex:none;height:36px;padding:3px 11px 0 17px;border-top:1px solid #c5c5c5;background:#eaeaea;box-shadow:inset 0 2px #fafafa;color:#555;font-size:14px;position:relative;z-index:2}
a{color:#555;text-decoration:none;display:flex;align-items:center;gap:10px;margin-right:12px}
b{min-width:26px;height:20px;line-height:20px;border-radius:10px;background:#999;color:#fff;text-align:center;margin-right:5px}
span{margin-right:6px}.r{margin:0 0 0 auto}
.m{margin-right:9px}`, `
<a href="#"><x-icon name="ext" size="13"></x-icon>View Site</a><b>1</b><span>Visitor</span><b>1</b><span>Administrator</span>
<x-icon class="m" name="mail" size="14"></x-icon><b>0</b><a href="#"><x-icon name="minus" size="14"></x-icon>Log out</a>
<a href="#"><x-icon name="cache" size="16"></x-icon>Clean Cache</a><span class="r">Joomla! 3.4.5 &nbsp;—&nbsp; © 2015 Lapeer County Concert Choir</span>`);

/* ---------- Windows task bar ---------- */
define('task-bar', `
:host{display:flex;flex:none;height:50px;background:#000206;color:#fff;font-family:"Open Sans","Noto Sans",sans-serif}
button{border:0;padding:0;background:none;display:flex;align-items:center;justify-content:center}
.start{width:60px}
.ask{display:flex;align-items:center;width:430px;background:#333;padding:0 16px 0 11px;gap:11px}
input{flex:1;min-width:0;border:0;outline:0;padding:0;background:none;font:17px "Open Sans","Noto Sans",sans-serif}
input::placeholder{color:#999;opacity:1}
.apps{display:flex}
.apps button{width:62px;border-bottom:3px solid transparent;border-image:linear-gradient(90deg,#0000 5px,#76b9ed 5px,#76b9ed 57px,#0000 57px) 1}
.apps .off{border-image:none}
.apps .act{border-image:none;border-color:#76b9ed;background:#41464c}
.tray{display:flex;align-items:center;gap:10px;margin-left:auto}
.clock{text-align:center;font-size:14px;line-height:22px}
.peek{width:6px;border-left:1px solid #666;align-self:stretch}`, `
<button class="start" aria-label="Start"><x-icon name="win"></x-icon></button>
<div class="ask"><x-icon name="cortana" size="28"></x-icon><input aria-label="Search" placeholder="Ask me anything"><x-icon name="mic" size="22"></x-icon></div>
<div class="apps">
<button class="off" aria-label="Task view"><x-icon name="taskview" size="24"></x-icon></button>
<button aria-label="Explorer"><x-icon name="explorer" size="27"></x-icon></button>
<button class="off" aria-label="Store"><x-icon name="store" size="26"></x-icon></button>
<button aria-label="1Password"><x-icon name="onepass" size="26"></x-icon></button>
<button class="act" aria-label="Firefox"><x-icon name="firefox" size="28"></x-icon></button>
<button aria-label="Bat"><x-icon name="bat" size="28"></x-icon></button>
<button aria-label="Chrome"><x-icon name="chrome" size="27"></x-icon></button>
<button aria-label="Weather"><x-icon name="weather" size="30"></x-icon></button>
<button aria-label="Calendar"><x-icon name="calendar" size="26"></x-icon></button>
<button aria-label="Word"><x-icon name="word" size="28"></x-icon></button>
</div>
<div class="tray"><x-icon name="trayup" size="18"></x-icon><x-icon name="dropbox"></x-icon><x-icon name="traybat"></x-icon><x-icon name="avast"></x-icon>
<x-icon name="net"></x-icon><x-icon name="vol"></x-icon><x-icon name="note"></x-icon><div class="clock">8:57 AM<br>10/30/2015</div><div class="peek"></div></div>`);
</script>
</body>
</html>
